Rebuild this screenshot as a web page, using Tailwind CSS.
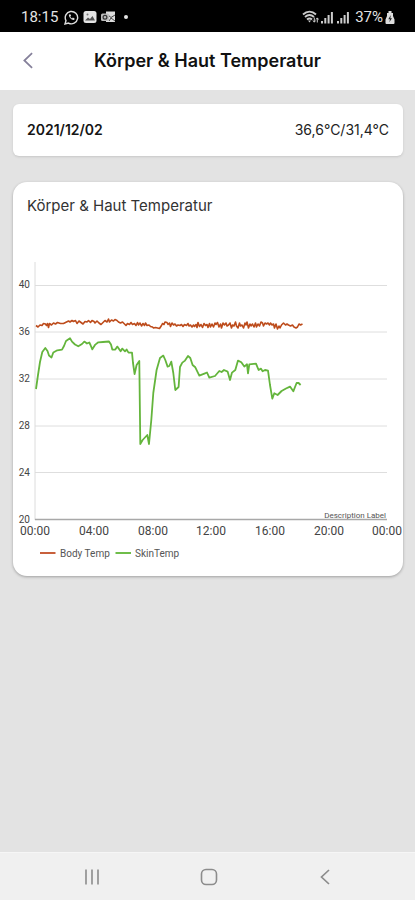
<!DOCTYPE html>
<html lang="de">
<head>
<meta charset="utf-8">
<meta name="viewport" content="width=device-width, initial-scale=1">
<title>Körper &amp; Haut Temperatur</title>
<script src="https://cdn.jsdelivr.net/npm/@tailwindcss/browser@4"></script>
</head>
<body class="flex min-h-screen flex-col bg-[#e3e3e3] font-['Inter',sans-serif] text-[#222]">
  <div class="flex h-8 items-center justify-between bg-black pt-0.5 pr-5 pl-[21px] font-['Roboto',sans-serif] text-[15px] text-[#e4e4e4]">
    <div class="flex items-center gap-1">
      <span class="mr-0.5">18:15</span>
      <svg class="size-[15px]" viewBox="0 0 15 15" fill="none" stroke="#ddd" stroke-width="1.4" aria-hidden="true"><path d="M1 14l1-3.4A6.2 6.2 0 1 1 4.500 13.100z"/><path d="M5 4.500c-.8 2.200 2.600 6 5.200 5.400l.4-1.400-1.700-.9-.9.800C7 8 6.500 7.300 6.300 6.500l.8-.8-.7-1.500z" fill="#ddd" stroke="none"/></svg>
      <svg class="size-[14px]" viewBox="0 0 14 14" aria-hidden="true"><rect x=".5" y="1" width="13" height="12" rx="2.500" fill="#e4e4e4"/><path d="M2 10.500l3-3 2 1.500 2.500-3 2.500 4.500z" fill="#555"/><circle cx="4.500" cy="4.500" r="1" fill="#777"/></svg>
      <svg class="h-[14px] w-[15px]" viewBox="0 0 15 14" aria-hidden="true"><path d="M5 1.500h9V12H5z" fill="#ddd"/><path d="M7 5l3 2.500L14 5M8 11l2-3 4 3" fill="none" stroke="#444"/><rect x="0" y="3.500" width="8" height="7.500" rx="1.500" fill="#bbb"/><circle cx="4" cy="7.200" r="1.900" fill="none" stroke="#333" stroke-width="1.200"/></svg>
      <span class="ml-1 size-1 rounded-full bg-[#e4e4e4]"></span>
    </div>
    <div class="flex items-center gap-0.5">
      <svg class="h-[14px] w-[17px]" viewBox="0 0 17 14" fill="none" stroke="#ccc" stroke-width="1.900" aria-hidden="true"><path d="M1 4.500c4-3.600 9-3.600 13 0M3 7c3-2.600 6-2.600 9 0M5 9.500c1.800-1.500 3.300-1.500 5 0"/><path d="M6 10.500h3L7.500 12.500z" fill="#ccc" stroke="none"/><path d="M12.300 7.500v4.500M11 10.500l1.300 1.700 1.300-1.700M15.300 12.500V8M14 9.500l1.300-1.600 1.300 1.600" stroke-width="1"/></svg>
      <svg class="h-[13px] w-[12px]" viewBox="0 0 12 13" fill="#ccc" aria-hidden="true"><path d="M0 10h2v2.500H0zM3.300 7h2v5.500h-2zM6.600 4h2v8.500h-2zM9.900 1h2v11.500h-2z"/></svg>
      <svg class="ml-0.5 h-[13px] w-[12px]" viewBox="0 0 12 13" fill="#ccc" aria-hidden="true"><path d="M0 10h2v2.500H0zM3.300 7h2v5.500h-2zM6.600 4h2v8.500h-2zM9.900 1h2v11.500h-2z"/></svg>
      <span class="ml-1">37%</span>
      <svg class="h-[13px] w-[10px]" viewBox="0 0 10 13" aria-hidden="true"><path d="M3.500 0h3v2H8v3l1.500 3.500V12a1 1 0 0 1-1 1h-7a1 1 0 0 1-1-1V8.500L2 5V2h1.500z" fill="#ddd"/><path d="M5.800 4L3.300 8.200H5L4.300 11.300 7 7.200H5.300z" fill="#222"/></svg>
    </div>
  </div>

  <header class="flex h-[58px] items-center bg-white px-5 pb-0.5">
    <button type="button" aria-label="Zurück" class="flex size-4 items-center justify-center">
      <svg class="h-[17px] w-[10px] shrink-0" viewBox="0 0 11 18" fill="none" stroke="#85809a" stroke-width="1.900" aria-hidden="true"><path d="M10 1L1.500 9 10 17"/></svg>
    </button>
    <h1 class="flex-1 pr-4 text-center text-[18px] font-semibold whitespace-nowrap text-[#111]">Körper &amp; Haut Temperatur</h1>
  </header>

  <main class="flex-1 pt-[14px] pr-3 pl-[13px]">
    <section class="flex h-[52px] items-center justify-between rounded-md bg-white px-[14px] pb-0.5 shadow-sm">
      <time datetime="2021-12-02" class="text-[14px] font-semibold text-[#151515]">2021/12/02</time>
      <span class="text-[14px]">36,6°C/31,4°C</span>
    </section>

    <section class="mt-[26px] overflow-hidden rounded-[14px] bg-white pt-[14px] shadow-[0_1px_3px_rgba(0,0,0,0.3)]">
      <h2 class="px-[14px] text-[15px] leading-5 text-[#333]">Körper &amp; Haut Temperatur</h2>
      <svg class="mt-6 block w-full font-['Roboto',sans-serif]" viewBox="13 240 390 336" role="img" aria-label="Körper- und Hauttemperatur im Tagesverlauf">
        <path d="M35 285.500H387M35 332H387M35 379H387M35 426H387M35 472.500H387" stroke="#dedede" stroke-width="1" fill="none"/>
        <path d="M35 262V520" stroke="#dcdcdc"/>
        <path d="M35 519.500H387" stroke="#a8a8a8" stroke-width="1.500"/>
        <g font-size="10" fill="#444" text-anchor="end">
          <text x="30" y="288">40</text><text x="30" y="335">36</text><text x="30" y="382">32</text><text x="30" y="429">28</text><text x="30" y="476">24</text><text x="30" y="523">20</text>
        </g>
        <g font-size="12" fill="#444" text-anchor="middle">
          <text x="35" y="535">00:00</text><text x="94" y="535">04:00</text><text x="153" y="535">08:00</text><text x="211" y="535">12:00</text><text x="270" y="535">16:00</text><text x="329" y="535">20:00</text><text x="387" y="535">00:00</text>
        </g>
        <text x="386" y="518" font-size="8" fill="#555" text-anchor="end">Description Label</text>
        <path fill="none" stroke="#bd4c1c" stroke-width="1.600" stroke-linejoin="round" d="M36 325.500l2 1.500 2-2 2 .5 1.500-2 2 .5 1 1.500 1-2 1 4 1-4 2 1.500 2-2 2 1 2-1.500 3 1h3l3-1.500 2-1 1.500 1 2-1.500 1.500 1 2-1 1.500 3 2-2.500 2 1.500 2 1.500 2-2.500 2 .5 1.500-1.500 2 2 1.500-2 2 1 1 1.500 2-2 2 2 2 1.500 2-2 2-2 2 1.500 1.500-3 1 3 2-2 2 1 1.500-1.500 2 1 1.500 1.500 2 1 2-1 2 2 1.500 1.500 1.500-2 2 1 1.500-2 1.500 2 2-1 1.500 2 1.500-3 1 2.500 1.500-2 1.500 3 1.500-2.500 1.500 2 1-2.500 1.500 2.500 2-.5 1.500 1.500 2 .5 1 1 2-.5 2 .5 2 .5 2-3 1-2 1.500 1 1-2.500 2 .5 1 2 1.500-1.500 1 3.500 1.500-3.500 1.500 2 1.500-1 1.500 2 1.500-1 2 .5 1.500-1 1.500 2 1.500-2 2 1 1.500-2 1 2.500 1.500-1 1.500 2 1.500-2 1 1.500 1.500-2 1 3 1-5 1.500 4 1.500-2 1.500 3 1.500-4 1.500 2 1.500-1 1 3 1.500-4 1 3.500 1.500-3 1.500 3 1.500-4 1 1.500 1.500-2 1.500 4.500 1.500-3 1 4 1.500-5 1.500 2 1.500-2 1 3 1.500-1 1.500-2 1.500 5 1-3 1.500 1 1.500-4 1 4 1.500 2 1.500-5 1 3 1.500-1 1.500 3 1.500-5 1 2 1-3 1.500 6 1.500-4 1 2 1.500-2 1.500 3 1.500-4 1 4 1.500-3 1.500 2 1.500-4 1.500 1 1 3 1.500-3 1.500 1 1.500-1 1.500 2 1-2 1.500 2 1.500-1 1 4 1.500-4 1.500 5 1.500-3 1 2 1.500-3 2-2 2 2 1.500-1 1.500 1 2 1 2-1 1.500 2 2 1 1.500-1 1.500-3 1.500 1 2-1"/>
        <path fill="none" stroke="#64b53c" stroke-width="1.800" stroke-linejoin="round" d="M36 389L38 375 40 362 42.300 352 45.300 348 47.500 351 49 355.500 51.500 357.500 53.300 352.500 57.300 350.300 62 349.600 64 346 66 341 70 338.300 72 341.600 75 344.500 78.300 346.300 82 344 84.300 341.600 87 343.500 89.300 342.500 90.500 345 92.300 349.300 95.300 344.600 98.300 342.300 103 342 109 341.500 111 344.600 112.300 349.600 115.300 349.600 117.300 346.600 120.600 351.300 122.300 348.600 125 351.300 126.600 349.500 128.500 352.600 132 352.600 133 363 134.600 374 136.600 365 139.300 361 140.300 444 142.600 440 147.300 435 149 444 151.300 420 153.300 393 156.600 370 160 358 163.300 355.600 165.300 360 167.600 366.600 169.300 366 171.300 361.600 173.300 373 175.300 390 178.600 387 180 367 182.300 362.600 185 360.600 188 356 190.300 358 192.600 365 195.300 367.300 199.300 375.600 205 373.300 207 372.500 209.300 377.600 215 376 219.300 371 221.600 372 224 370 227.600 371.600 230 380 232 372.600 235.300 370 238 360.600 241.300 362.300 244.300 366.600 247 364.300 248 373.300 249.300 364.300 256 363.600 258.600 370 261 368.600 262.600 371.300 265 370 268 370.600 270 385 272.300 398.600 274.300 393.300 277.600 395 281.600 391 286 388.500 290 386.600 293.300 391.300 296.600 383 298.600 383 300.600 385"/>
        <g font-size="10" fill="#555">
          <path d="M40 553H55.500" stroke="#c8603c" stroke-width="2"/>
          <text x="60" y="557">Body Temp</text>
          <path d="M115.500 553H131" stroke="#6fbd4a" stroke-width="2"/>
          <text x="135" y="557">SkinTemp</text>
        </g>
      </svg>
    </section>
  </main>

  <nav aria-label="System" class="flex h-12 items-center justify-between border-t border-[#f6f6f6] bg-[#f0f0f0] pr-[82px] pl-[84px]">
    <button type="button" aria-label="Letzte Apps"><svg class="size-4" viewBox="0 0 16 16" fill="none" stroke="#8c8c8c" stroke-width="1.600" aria-hidden="true"><path d="M2 .5v15M8 .5v15M14 .5v15"/></svg></button>
    <button type="button" aria-label="Startseite"><svg class="size-[18px]" viewBox="0 0 18 18" fill="none" stroke="#8c8c8c" stroke-width="1.600" aria-hidden="true"><rect x="1.500" y="1.500" width="15" height="15" rx="4.500"/></svg></button>
    <button type="button" aria-label="Zurück"><svg class="size-4" viewBox="0 0 16 16" fill="none" stroke="#8c8c8c" stroke-width="1.700" aria-hidden="true"><path d="M12 1L4.500 8 12 15"/></svg></button>
  </nav>
</body>
</html>
